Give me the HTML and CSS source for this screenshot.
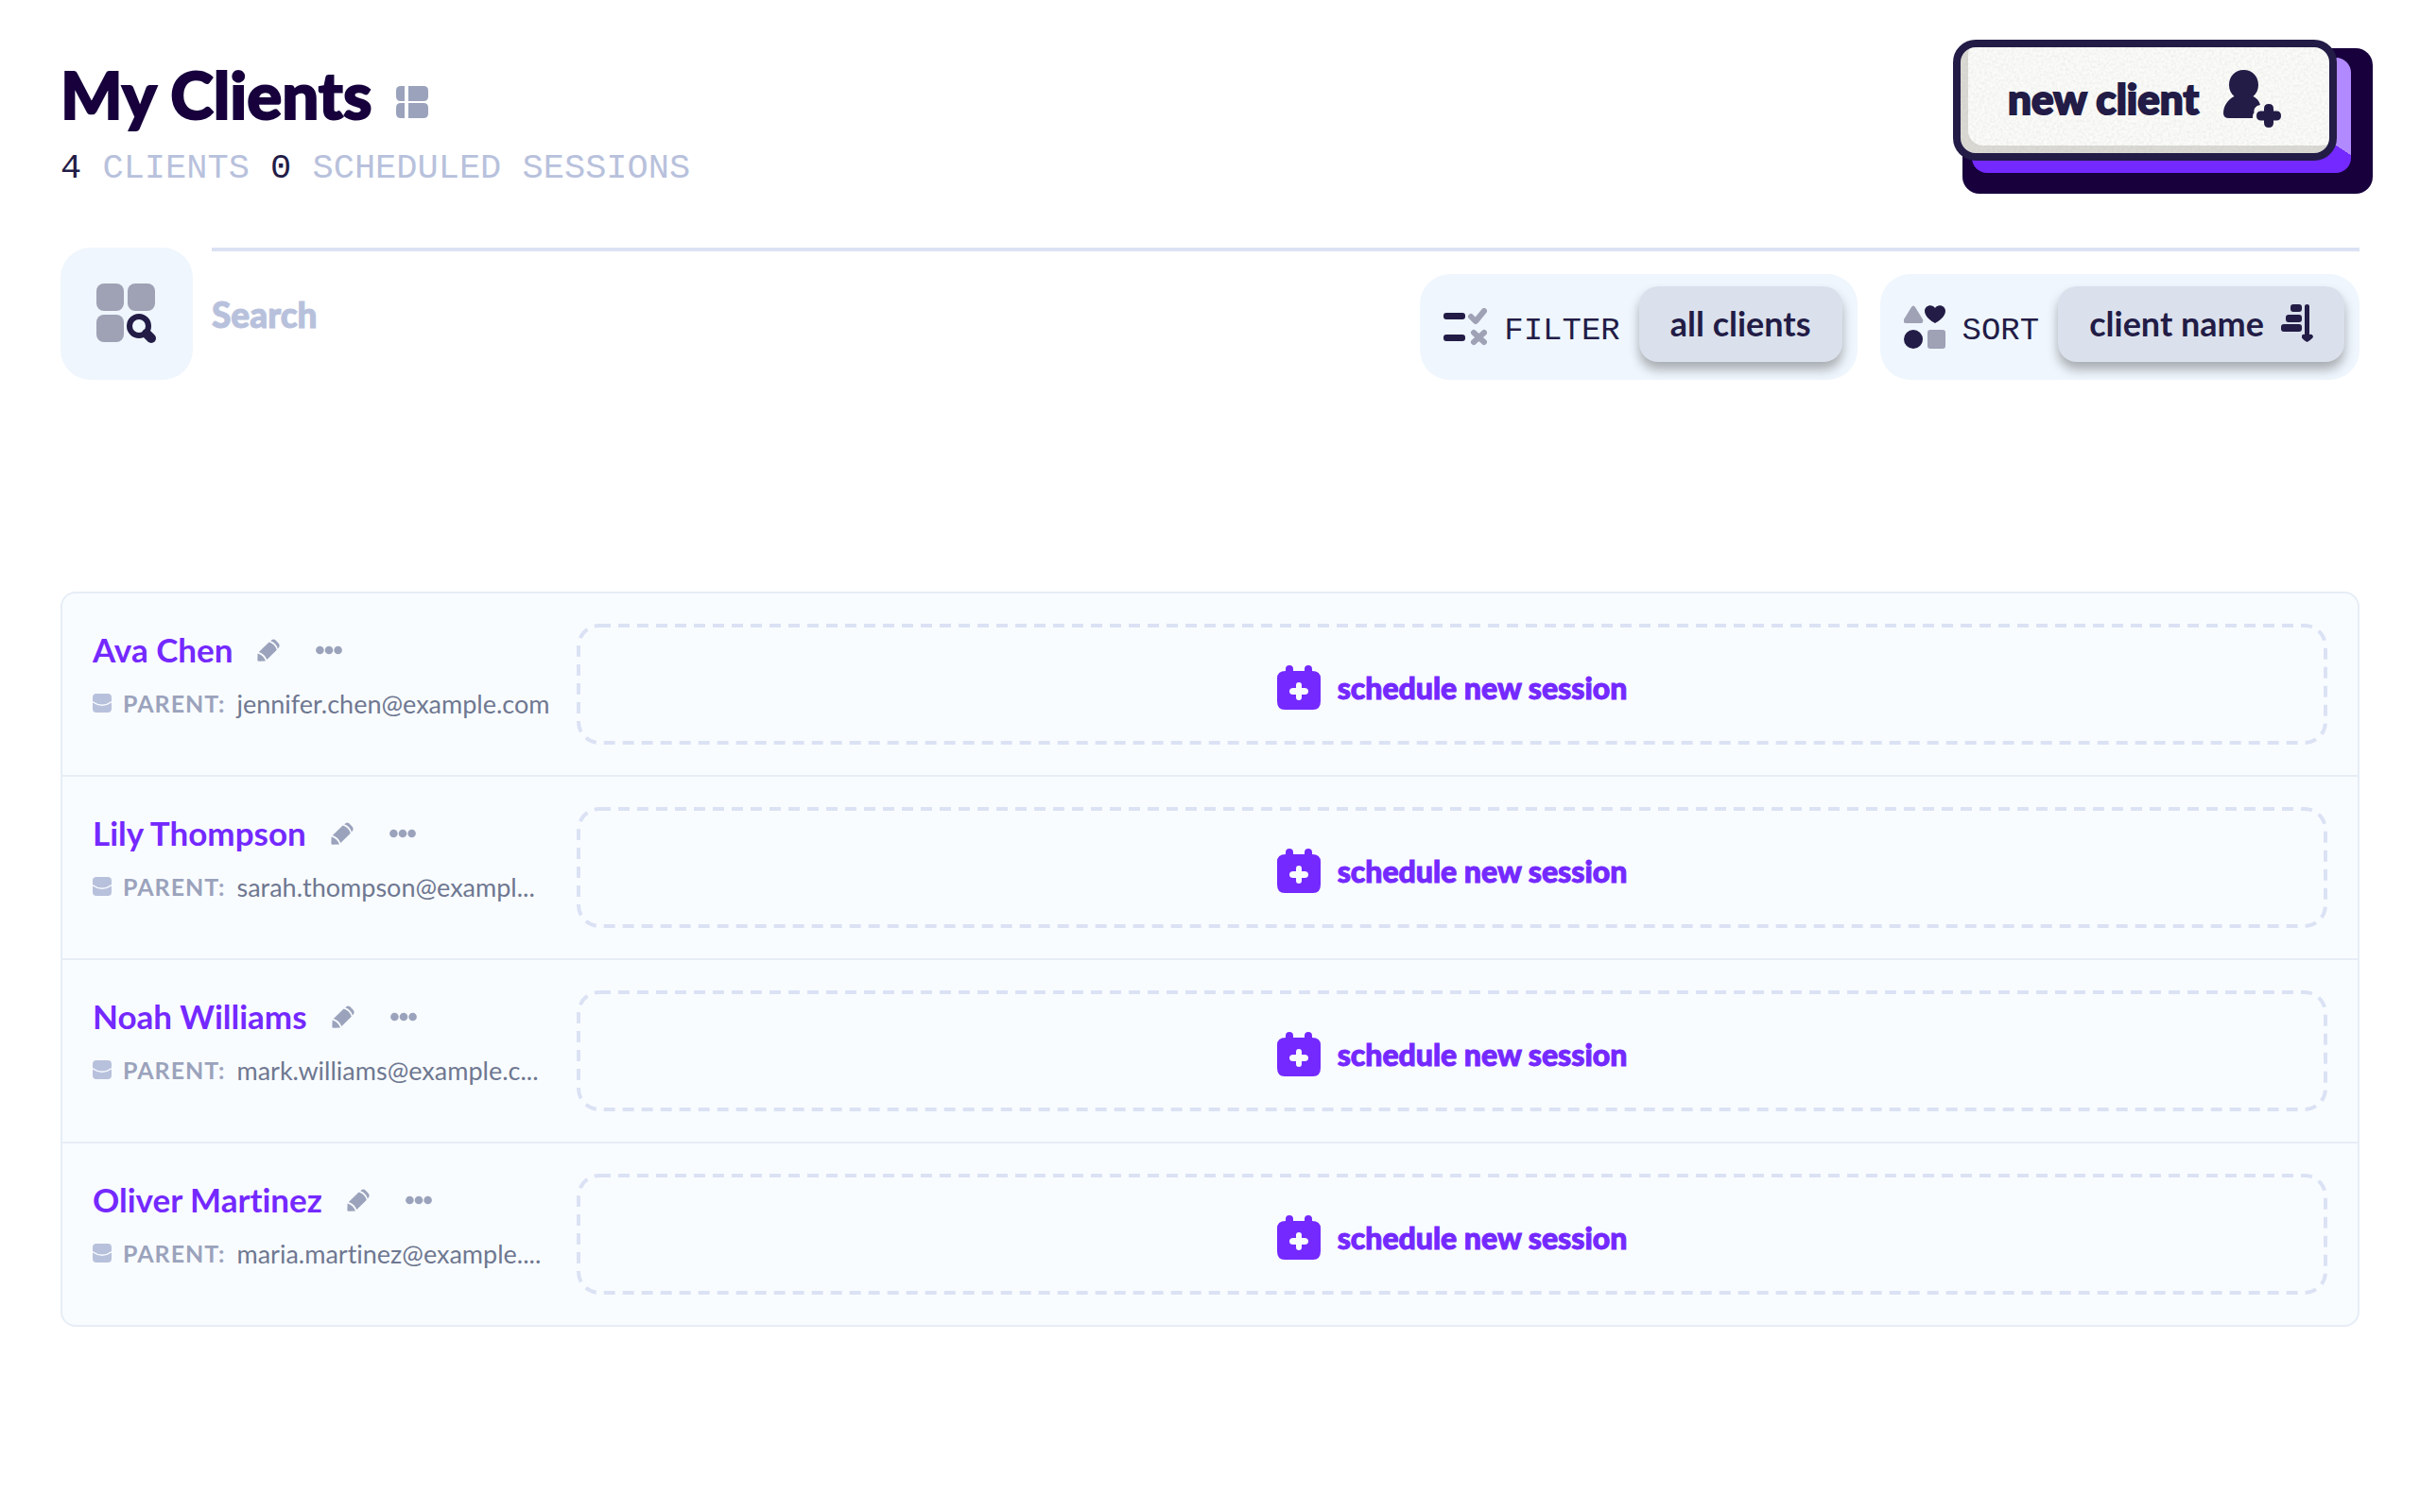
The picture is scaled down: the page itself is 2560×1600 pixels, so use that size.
FILE: index.html
```html
<!DOCTYPE html>
<html lang="en">
  <head>
    <meta charset="utf-8">
    <title>My Clients</title>
    <link rel="stylesheet" href="styles.css">
  </head>
  <body>
    <svg class="sprite" aria-hidden="true">
      <filter id="paper" x="0" y="0" width="100%" height="100%">
        <feTurbulence type="fractalNoise" baseFrequency="0.35" numOctaves="3"/>
        <feColorMatrix values="0 0 0 0 0.4  0 0 0 0 0.4  0 0 0 0 0.36  0.3 0 0 0 -0.1"/>
      </filter>
      <symbol id="icon-pencil" viewBox="0 0 24 24">
        <path d="M14.2 2.2 Q17 -.8 19.6 1.6 L22.4 4.6 Q25 7.4 22.2 10 L21.8 10.4 Q20.4 4.4 14.2 2.2Z"/>
        <path d="M12.6 3.6 Q18.8 5.6 20.8 11.8 L10.4 22 Q8 16.2 1.8 14Z"/>
        <path d="M.6 15.4 Q6.8 17.6 9 23.4 L2 23.8 Q.4 23.8 .4 22.2Z"/>
      </symbol>
      <symbol id="icon-dots" viewBox="0 0 28 10">
        <circle cx="4.4" cy="5" r="4.3"/><circle cx="14" cy="5" r="4.3"/><circle cx="23.6" cy="5" r="4.3"/>
      </symbol>
      <symbol id="icon-mail" viewBox="0 0 20 20">
        <path d="M4 0 H16 Q20 0 20 4 V8 Q15 11.5 10 11.5 Q5 11.5 0 8 V4 Q0 0 4 0Z"/>
        <path d="M0 9.5 Q5 13 10 13 Q15 13 20 9.5 V16 Q20 20 16 20 H4 Q0 20 0 16Z"/>
      </symbol>
      <symbol id="icon-calendar" viewBox="0 0 46 47">
        <path fill-rule="evenodd" d="M9 6 V4 Q9 0 13 0 Q17 0 17 4 V6 H29 V4 Q29 0 33 0 Q37 0 37 4 V6 Q46 6 46 14 V38 Q46 47 38 47 H8 Q0 47 0 38 V14 Q0 6 9 6Z M20 21 V24 H17 Q13 24 13 27.5 Q13 31 17 31 H20 V34 Q20 37 23 37 Q26 37 26 34 V31 H29 Q33 31 33 27.5 Q33 24 29 24 H26 V21 Q26 18 23 18 Q20 18 20 21Z"/>
      </symbol>
    </svg>

    <header class="page-header">
      <div>
        <div class="title-row">
          <h1>My Clients</h1>
          <svg class="view-icon" viewBox="0 0 34 34" aria-hidden="true">
            <path d="M9 0 V16 H5 Q0 16 0 11 V5 Q0 0 5 0Z M13 0 H29 Q34 0 34 5 V11 Q34 16 29 16 H13Z M9 18 V34 H5 Q0 34 0 29 V23 Q0 18 5 18Z M13 18 H29 Q34 18 34 23 V29 Q34 34 29 34 H13Z"/>
          </svg>
        </div>
        <p class="summary"><strong>4</strong> CLIENTS <strong>0</strong> SCHEDULED SESSIONS</p>
      </div>
      <div class="new-client-base">
        <div class="new-client-plate">
          <button class="new-client" type="button">
            <svg class="texture" aria-hidden="true"><rect width="100%" height="100%" filter="url(#paper)"/></svg>
            <span>new client</span>
            <svg class="new-client-icon" viewBox="0 0 62 62" aria-hidden="true">
              <path d="M21.5 0 C31 0 37 7 37 16 C37 21 35 25 31.5 28 C35 29.5 38 33 39 37 C34 38 32 41 32.5 45 C31 47 31 49 31 51 H6 Q0 51 0 46 C0 38 5 31 11.5 28 C8 25 6 21 6 16 C6 7 12 0 21.5 0Z"/>
              <path d="M43 41 Q43 36 48 36 Q53 36 53 41 V43.5 H56 Q61 43.5 61 48.5 Q61 53.5 56 53.5 H53 V56 Q53 61 48 61 Q43 61 43 56 V53.5 H40 Q35 53.5 35 48.5 Q35 43.5 40 43.5 H43Z"/>
            </svg>
          </button>
        </div>
      </div>
    </header>

    <section class="toolbar">
      <label class="search-badge" for="search" title="Search">
        <svg class="search-icon" viewBox="0 0 64 64" aria-hidden="true">
          <g class="muted">
            <rect width="29" height="29" rx="8"/><rect x="33" width="29" height="29" rx="8"/><rect y="33" width="29" height="29" rx="8"/>
          </g>
          <circle class="ring" cx="45" cy="45" r="10"/>
          <path class="handle" d="M53 53 L58 58"/>
        </svg>
      </label>
      <div class="toolbar-main">
        <input class="search" id="search" type="text" placeholder="Search">
        <div class="control">
          <svg class="filter-icon" viewBox="0 0 46 40" aria-hidden="true">
            <rect y="5" width="23" height="7" rx="3"/><rect y="28" width="23" height="7" rx="3"/>
            <path class="mark" d="M29 9 L34 14 L43 3 M32 26 L43 36 M43 26 L32 36"/>
          </svg>
          <span class="control-label" id="filter-label">FILTER</span>
          <button class="pill" type="button" aria-describedby="filter-label">all clients</button>
        </div>
        <div class="control">
          <svg class="sort-icon" viewBox="0 0 44 46" aria-hidden="true">
            <path class="muted" d="M8 2 Q10 -1 12 2 L20 15 Q21 19 18 19 H2 Q-1 19 0 15Z"/>
            <path d="M33 19 C29 17 22 12 22 6 C22 0 30 -2 33 3 C36 -2 44 0 44 6 C44 12 37 17 33 19Z"/>
            <circle cx="10" cy="36" r="10"/>
            <rect class="muted" x="25" y="26" width="19" height="20" rx="3"/>
          </svg>
          <span class="control-label" id="sort-label">SORT</span>
          <button class="pill" type="button" aria-describedby="sort-label">
            client name
            <svg class="order-icon" viewBox="0 0 34 40" aria-hidden="true">
              <rect x="10" width="12" height="8" rx="3"/><rect x="5" y="11" width="17" height="8" rx="3"/><rect y="21" width="22" height="8" rx="3"/>
              <path d="M25 2 Q25 0 27.5 0 Q30 0 30 2 V32 Q33 31 34 34 Q34 36 27.5 40 Q21 36 22 34 Q22 31 25 32Z"/>
            </svg>
          </button>
        </div>
      </div>
    </section>

    <main class="client-list">
      <article class="client">
        <div class="client-info">
          <div class="client-head">
            <a class="client-name" href="#">Ava Chen</a>
            <button class="icon-btn" type="button" aria-label="Edit"><svg class="pencil"><use href="#icon-pencil"/></svg></button>
            <button class="icon-btn" type="button" aria-label="More"><svg class="dots"><use href="#icon-dots"/></svg></button>
          </div>
          <p class="contact"><svg class="mail"><use href="#icon-mail"/></svg><span class="role">PARENT:</span><span class="email">jennifer.chen@example.com</span></p>
        </div>
        <button class="schedule" type="button"><svg class="outline"><rect/></svg><svg class="calendar"><use href="#icon-calendar"/></svg>schedule new session</button>
      </article>
      <article class="client">
        <div class="client-info">
          <div class="client-head">
            <a class="client-name" href="#">Lily Thompson</a>
            <button class="icon-btn" type="button" aria-label="Edit"><svg class="pencil"><use href="#icon-pencil"/></svg></button>
            <button class="icon-btn" type="button" aria-label="More"><svg class="dots"><use href="#icon-dots"/></svg></button>
          </div>
          <p class="contact"><svg class="mail"><use href="#icon-mail"/></svg><span class="role">PARENT:</span><span class="email">sarah.thompson@exampl...</span></p>
        </div>
        <button class="schedule" type="button"><svg class="outline"><rect/></svg><svg class="calendar"><use href="#icon-calendar"/></svg>schedule new session</button>
      </article>
      <article class="client">
        <div class="client-info">
          <div class="client-head">
            <a class="client-name" href="#">Noah Williams</a>
            <button class="icon-btn" type="button" aria-label="Edit"><svg class="pencil"><use href="#icon-pencil"/></svg></button>
            <button class="icon-btn" type="button" aria-label="More"><svg class="dots"><use href="#icon-dots"/></svg></button>
          </div>
          <p class="contact"><svg class="mail"><use href="#icon-mail"/></svg><span class="role">PARENT:</span><span class="email">mark.williams@example.c...</span></p>
        </div>
        <button class="schedule" type="button"><svg class="outline"><rect/></svg><svg class="calendar"><use href="#icon-calendar"/></svg>schedule new session</button>
      </article>
      <article class="client">
        <div class="client-info">
          <div class="client-head">
            <a class="client-name" href="#">Oliver Martinez</a>
            <button class="icon-btn" type="button" aria-label="Edit"><svg class="pencil"><use href="#icon-pencil"/></svg></button>
            <button class="icon-btn" type="button" aria-label="More"><svg class="dots"><use href="#icon-dots"/></svg></button>
          </div>
          <p class="contact"><svg class="mail"><use href="#icon-mail"/></svg><span class="role">PARENT:</span><span class="email">maria.martinez@example....</span></p>
        </div>
        <button class="schedule" type="button"><svg class="outline"><rect/></svg><svg class="calendar"><use href="#icon-calendar"/></svg>schedule new session</button>
      </article>
    </main>
  </body>
</html>
```
FILE: styles.css
```css
* {
  box-sizing: border-box;
}

body {
  margin: 0;
  padding: 42px 64px;
  background: #ffffff;
  color: #221c46;
  font-family: Lato, "Liberation Sans", sans-serif;
  font-variant-ligatures: none;
}

h1,
p {
  margin: 0;
}

button,
input {
  font-family: inherit;
  font-variant-ligatures: inherit;
  color: inherit;
}

button {
  cursor: pointer;
}

svg {
  display: block;
  flex: none;
}

.sprite {
  position: absolute;
  width: 0;
  height: 0;
}

.muted {
  fill: #9fa1b5;
}

/* Header */
.page-header {
  display: flex;
  justify-content: space-between;
  align-items: flex-start;
  height: 220px;
}

.title-row {
  display: flex;
  align-items: center;
  gap: 26px;
  padding-top: 16px;
}

h1 {
  color: #17003c;
  font-size: 69px;
  font-weight: 900;
  line-height: 84px;
  -webkit-text-stroke: 2px #17003c;
}

.view-icon {
  width: 34px;
  height: 34px;
  margin-top: 16px;
  fill: #9ba3bc;
}

.summary {
  padding-top: 6px;
  color: #b8c1dc;
  font-family: "Liberation Mono", monospace;
  font-size: 37px;
  line-height: 60px;
}

.summary strong {
  color: #221c46;
  font-weight: 400;
}

/* dark plate and purple plate stacked under the button */
.new-client-base {
  width: 434px;
  height: 154px;
  margin: 9px -14px 0 0;
  padding: 10px 23px 22px 10px;
  border-radius: 18px;
  background: #17003c;
}

.new-client-plate {
  display: flex;
  align-items: flex-start;
  height: 122px;
  border-radius: 16px;
  background: linear-gradient(33deg, #7429ff 73%, #b28aff 73%);
}

.new-client {
  position: relative;
  isolation: isolate;
  display: flex;
  flex: none;
  align-items: center;
  gap: 26px;
  width: 406px;
  height: 128px;
  margin: -19px 0 0 -20px;
  padding: 0 0 4px 50px;
  border: 8px solid #221c46;
  border-radius: 24px;
  background: #fbfbf9;
  box-shadow: inset 8px -8px #dad9d4;
  font-size: 44px;
  font-weight: 900;
  -webkit-text-stroke: 2px #221c46;
}

.texture {
  position: absolute;
  z-index: -1;
  top: 0;
  left: 0;
  width: 100%;
  height: 100%;
  border-radius: 16px;
}

.new-client-icon {
  width: 62px;
  height: 62px;
  margin-top: 2px;
  fill: #221c46;
}

/* Toolbar */
.toolbar {
  display: flex;
  gap: 20px;
}

.search-badge {
  display: flex;
  justify-content: center;
  align-items: center;
  width: 140px;
  height: 140px;
  border-radius: 32px;
  background: #eff6fd;
}

.search-icon {
  width: 64px;
  height: 64px;
}

.ring {
  fill: none;
  stroke: #221c46;
  stroke-width: 6;
}

.handle {
  stroke: #221c46;
  stroke-width: 10;
  stroke-linecap: round;
}

.toolbar-main {
  display: flex;
  flex: 1;
  align-items: flex-end;
  gap: 24px;
  border-top: 4px solid #dbe2f4;
}

.search {
  flex: 1;
  min-width: 0;
  height: 136px;
  padding: 0 0 4px;
  border: 0;
  outline: 0;
  background: none;
  font-size: 37px;
  font-weight: 900;
}

.search::placeholder {
  color: #b8c1dc;
  -webkit-text-stroke: 1px #b8c1dc;
}

.control {
  display: flex;
  align-items: center;
  height: 112px;
  padding: 0 16px 6px 25px;
  border-radius: 32px;
  background: #eff6fd;
}

.control-label {
  margin: 0 20px 0 18px;
  padding-top: 14px;
  font-family: "Liberation Mono", monospace;
  font-size: 34px;
}

.filter-icon,
.sort-icon {
  margin-top: 6px;
  fill: #221c46;
}

.filter-icon {
  width: 46px;
  height: 40px;
}

.sort-icon {
  width: 44px;
  height: 46px;
}

.mark {
  fill: none;
  stroke: #9fa1b5;
  stroke-width: 6;
  stroke-linecap: round;
  stroke-linejoin: round;
}

.pill {
  display: flex;
  align-items: center;
  gap: 18px;
  height: 80px;
  padding: 0 33px 2px;
  border: 0;
  border-radius: 20px;
  background: #dbe1ec;
  box-shadow: 0 8px 12px rgba(0, 0, 0, 0.3);
  font-size: 36px;
  font-weight: 700;
}

.order-icon {
  width: 34px;
  height: 40px;
  fill: #221c46;
}

/* Client rows */
.client-list {
  margin-top: 224px;
  border: 2px solid #e6edf6;
  border-radius: 16px;
  background: #f9fcff;
}

.client {
  display: flex;
  padding: 32px;
}

.client + .client {
  border-top: 2px solid #e6edf6;
}

.client-info {
  width: 480px;
  margin-right: 32px;
}

.client-head {
  display: flex;
  align-items: center;
  height: 56px;
}

.client-name {
  margin-right: 12px;
  padding-bottom: 2px;
  color: #7429ff;
  font-size: 35px;
  font-weight: 700;
  text-decoration: none;
}

.icon-btn {
  display: flex;
  justify-content: center;
  align-items: center;
  width: 52px;
  height: 52px;
  margin-right: 12px;
  padding: 0;
  border: 0;
  background: none;
}

.pencil {
  width: 24px;
  height: 24px;
  fill: #9ba3bc;
}

.dots {
  width: 28px;
  height: 10px;
  fill: #9ba3bc;
}

.contact {
  display: flex;
  align-items: center;
  height: 56px;
}

.mail {
  width: 20px;
  height: 20px;
  margin-right: 12px;
  fill: #b8c1dc;
}

.role {
  margin-right: 12px;
  color: #9ba3bc;
  font-size: 25px;
  font-weight: 700;
  letter-spacing: 1px;
}

.email {
  color: #6f7891;
  font-size: 27px;
}

.schedule {
  position: relative;
  display: flex;
  flex: 1;
  justify-content: center;
  align-items: center;
  gap: 18px;
  height: 128px;
  padding: 6px 0 0;
  border: 0;
  background: none;
  color: #7429ff;
  font-size: 32px;
  font-weight: 900;
  -webkit-text-stroke: 1px #7429ff;
}

.outline {
  position: absolute;
  top: 0;
  left: 0;
  width: 100%;
  height: 100%;
}

.outline rect {
  x: 2px;
  y: 2px;
  width: calc(100% - 4px);
  height: calc(100% - 4px);
  rx: 22px;
  fill: none;
  stroke: #dbe2f4;
  stroke-width: 4px;
  stroke-dasharray: 12 8;
}

.calendar {
  width: 46px;
  height: 47px;
  fill: #7429ff;
}
```
